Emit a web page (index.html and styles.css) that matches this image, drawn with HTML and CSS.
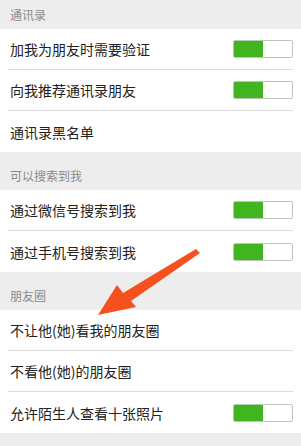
FILE: index.html
```html
<!DOCTYPE html>
<html lang="zh-CN">
<head>
	<meta charset="UTF-8">
	<link rel="stylesheet" href="styles.css">
	<title>隐私</title>
</head>
<body>
<div class="page">
	<div class="head head-top"><span>通讯录</span></div>
	<div class="group">
		<div class="row"><span class="txt">加我为朋友时需要验证</span><span class="switch on"></span></div>
		<div class="row"><span class="txt">向我推荐通讯录朋友</span><span class="switch on"></span></div>
		<div class="row"><span class="txt">通讯录黑名单</span></div>
	</div>
	<div class="head"><span>可以搜索到我</span></div>
	<div class="group">
		<div class="row"><span class="txt">通过微信号搜索到我</span><span class="switch on"></span></div>
		<div class="row"><span class="txt">通过手机号搜索到我</span><span class="switch on"></span></div>
	</div>
	<div class="head"><span>朋友圈</span></div>
	<div class="group">
		<div class="row"><span class="txt">不让他(她)看我的朋友圈</span></div>
		<div class="row"><span class="txt">不看他(她)的朋友圈</span></div>
		<div class="row"><span class="txt">允许陌生人查看十张照片</span><span class="switch on"></span></div>
	</div>
	<svg class="arrow" width="301" height="446" viewBox="0 0 301 446">
		<polygon points="196,249 200,253 131,301 136,307 98,315 117,285 123,293" fill="#f4511e"/>
	</svg>
</div>
</body>
</html>
```

FILE: styles.css
```css
body,div,span{
	margin: 0;
	padding: 0;
}
body{
	background: #ededed;
	font-family: "Noto Sans CJK SC", "Noto Sans", sans-serif;
}
.page{
	position: relative;
	width: 301px;
	height: 446px;
	overflow: hidden;
}
.head{
	display: flex;
	align-items: flex-end;
	height: 38px;
	padding: 0 10px 6px;
	box-sizing: border-box;
	font-size: 12px;
	line-height: 16px;
	color: #8a8a8a;
}
.head-top{
	height: 29px;
}
.group{
	background: #fff;
}
.row{
	display: flex;
	align-items: center;
	justify-content: space-between;
	height: 41px;
	margin: 0 8px;
	padding-left: 2px;
	border-bottom: #dcdcdc 1px solid;
	box-sizing: border-box;
	font-size: 14px;
	color: #222;
}
.row:last-child{
	border-bottom: none;
}
.switch{
	display: block;
	width: 60px;
	height: 18px;
	border: #c8c8c8 1px solid;
	border-radius: 2px;
	box-sizing: border-box;
	background: #fff;
}
.switch.on{
	background: linear-gradient(90deg, #40b51f 50%, #fff 50%);
	border-color: #b9c9b5;
}
.arrow{
	position: absolute;
	left: 0;
	top: 0;
}
```
